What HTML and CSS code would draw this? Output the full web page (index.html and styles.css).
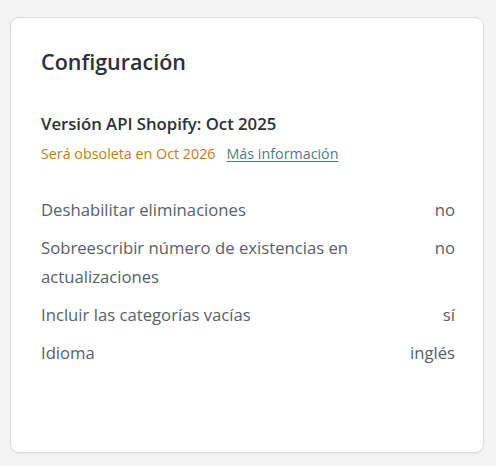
FILE: index.html
```html
<!DOCTYPE html>
<html lang="es">
<head>
<meta charset="utf-8">
<link rel="stylesheet" href="styles.css">
</head>
<body>
<section class="card">
  <h2 class="title">Configuración</h2>
  <div class="api">
    <div class="api-version">Versión API Shopify: Oct 2025</div>
    <div class="api-note"><span class="warn">Será obsoleta en Oct 2026</span><a class="more" href="#">Más información</a></div>
  </div>
  <dl class="settings">
    <div class="row"><dt>Deshabilitar eliminaciones</dt><dd>no</dd></div>
    <div class="row"><dt>Sobreescribir número de existencias en actualizaciones</dt><dd>no</dd></div>
    <div class="row"><dt>Incluir las categorías vacías</dt><dd>sí</dd></div>
    <div class="row"><dt>Idioma</dt><dd>inglés</dd></div>
  </dl>
</section>
</body>
</html>
```
FILE: styles.css
```css
html, body {
  margin: 0;
  background: #f4f4f4;
}
body {
  padding: 17px 12px 13px 10px;
  font-family: "Open Sans", "Noto Sans", sans-serif;
}
.card {
  box-sizing: border-box;
  height: 436px;
  background: #fff;
  border: 1px solid #dcdcdc;
  border-radius: 9px;
  box-shadow: 0 1px 2px rgba(0,0,0,0.06);
  padding: 29px 28px 20px 30px;
}
.title {
  margin: 0;
  font-size: 21.5px;
  line-height: 30px;
  font-weight: 600;
  color: #2b3039;
}
.api {
  margin-top: 35px;
}
.api-version {
  font-size: 16.7px;
  font-weight: 600;
  line-height: 24px;
  color: #2b3039;
}
.api-note {
  margin-top: 8px;
  font-size: 14.3px;
  line-height: 20px;
  display: flex;
  gap: 11px;
}
.warn { color: #c27c1e; }
.more {
  color: #4d7d84;
  text-decoration: underline;
  text-underline-offset: 2px;
}
.settings {
  margin: 31px 0 0;
  display: flex;
  flex-direction: column;
  gap: 9px;
}
.row {
  display: flex;
  justify-content: space-between;
  gap: 40px;
  font-size: 16.7px;
  line-height: 29px;
  color: #596068;
}
.row dt { margin: 0; max-width: 330px; }
.row dd { margin: 0; text-align: right; white-space: nowrap; }
```
